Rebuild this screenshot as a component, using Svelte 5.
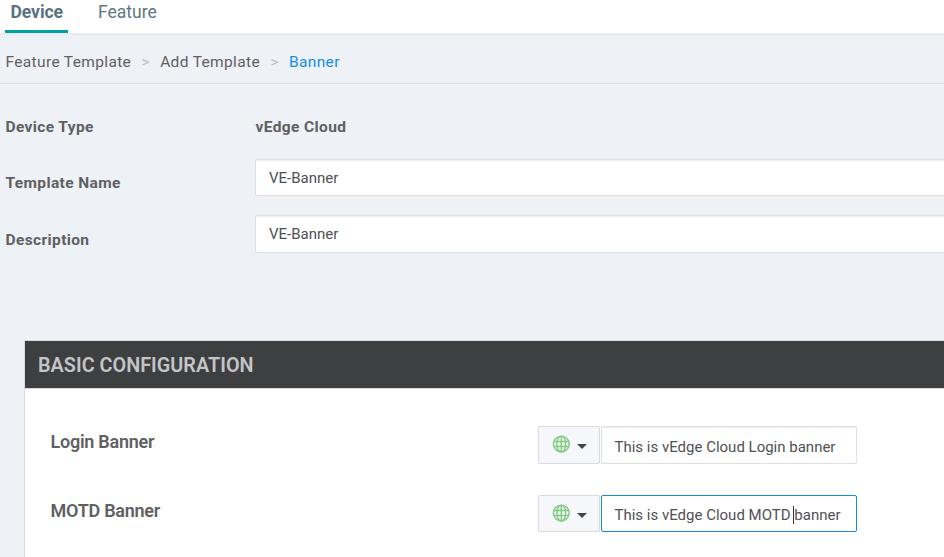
<script>
  const tabs = [
    { label: 'Device', active: true },
    { label: 'Feature', active: false }
  ];
  const banners = [
    { label: 'Login Banner', before: 'This is vEdge Cloud Login banner', after: '', focused: false },
    { label: 'MOTD Banner', before: 'This is vEdge Cloud MOTD ', after: 'banner', focused: true }
  ];
</script>

<div class="page">
  <nav class="tabs">
    {#each tabs as tab}
      <div class="tab" class:active={tab.active}><span>{tab.label}</span></div>
    {/each}
  </nav>

  <div class="crumbs">
    <span>Feature Template</span><i>&gt;</i><span>Add Template</span><i>&gt;</i><span class="current">Banner</span>
  </div>

  <div class="form">
    <div class="row type"><span class="label">Device Type</span><span class="label">vEdge Cloud</span></div>
    <div class="row name"><span class="label">Template Name</span><div class="field"><span>VE-Banner</span></div></div>
    <div class="row desc"><span class="label">Description</span><div class="field"><span>VE-Banner</span></div></div>
  </div>

  <section class="panel">
    <h2><span>BASIC CONFIGURATION</span></h2>
    {#each banners as b}
      <div class="setting" class:focused={b.focused}>
        <span class="title">{b.label}</span>
        <div class="scope">
          <svg class="globe" width="18" height="18" viewBox="0 0 18 18" fill="none" stroke="#83ca83" stroke-width="1.45">
            <circle cx="9.3" cy="9" r="7.9" />
            <ellipse cx="9.3" cy="9" rx="4.4" ry="7.9" />
            <path d="M9.3 1.3v15.4M2 6.5h14.6M2 11.5h14.6" />
          </svg>
          <svg class="caret" width="10" height="5" viewBox="0 0 10 5"><path d="M0 0h10L5 5z" fill="#444548" /></svg>
        </div>
        <div class="value"><span>{b.before}{#if b.focused}<b class="cursor"></b>{/if}{b.after}</span></div>
      </div>
    {/each}
  </section>
</div>

<style>
  :global(body) {
    overflow: hidden;
    background: #eef1f6;
  }
  .page {
    box-sizing: border-box;
    height: 557px;
    overflow: hidden;
    display: flex;
    flex-direction: column;
    background: #eef1f6;
    font-family: Roboto, "Liberation Sans", sans-serif;
    color: #5f6062;
  }
  span {
    white-space: pre;
  }
  .tabs {
    flex: none;
    box-sizing: border-box;
    display: flex;
    gap: 25px;
    height: 34px;
    padding-left: 5px;
    background: #fff;
    border-bottom: 1px solid #e9ecef;
    box-shadow: 0 1px 1px #e7eaee;
  }
  .tab {
    box-sizing: border-box;
    height: 33px;
    padding: 0 5px;
    font-size: 17.5px;
    line-height: 24px;
    color: #607681;
    border-bottom: 3px solid transparent;
  }
  .tab.active {
    width: 63px;
    padding-left: 5.5px;
    font-size: 17.6px;
    font-weight: 700;
    letter-spacing: -.1px;
    color: #587382;
    border-bottom-color: #00a2a1;
  }
  .crumbs {
    flex: none;
    box-sizing: border-box;
    height: 50px;
    padding: 6px 0 0 5.5px;
    display: flex;
    align-items: center;
    font-size: 15.5px;
    letter-spacing: .35px;
    border-bottom: 1px solid #dbdee2;
  }
  .crumbs i {
    font-style: normal;
    font-size: 15px;
    width: 29px;
    text-align: center;
    color: #bbbdc1;
  }
  .crumbs .current {
    color: #168ee9;
  }
  .form {
    flex: none;
    height: 256px;
  }
  .row {
    display: grid;
    grid-template-columns: 250px 1fr;
    padding-left: 5px;
  }
  .row.type {
    height: 75px;
    line-height: 86px;
  }
  .row.name {
    height: 56px;
  }
  .label {
    padding-left: .5px;
    font-size: 15.5px;
    font-weight: 700;
    letter-spacing: .38px;
  }
  .row.name .label {
    line-height: 48px;
  }
  .row.desc .label {
    line-height: 50px;
  }
  .field,
  .value {
    box-sizing: border-box;
    height: 37px;
    padding-left: 13px;
    border: 1px solid #dddfe1;
    border-radius: 2px;
    background: #fff;
    box-shadow: inset 0 1px 1px #eeeeef;
    font-size: 15px;
    line-height: 36px;
    color: #505154;
  }
  .field {
    margin-right: -4px;
  }
  .row.desc .field {
    height: 38px;
  }
  .panel {
    flex: none;
    box-sizing: border-box;
    height: 240px;
    margin: 0 -4px 0 24px;
    border: 1px solid #d8dbde;
    background: #fff;
  }
  h2 {
    box-sizing: border-box;
    height: 48px;
    margin: 0 0 37px;
    padding-left: 13px;
    background: #3e3f41;
    border-bottom: 1px solid #d8d9da;
    font-size: 19.8px;
    font-weight: 600;
    letter-spacing: .03px;
    line-height: 50px;
    color: #c4c5c7;
  }
  .setting {
    display: flex;
    height: 69px;
    padding-left: 25px;
    box-sizing: border-box;
  }
  .title {
    box-sizing: border-box;
    width: 488px;
    padding-left: .5px;
    font-size: 18px;
    font-weight: 600;
    letter-spacing: -.25px;
    line-height: 31px;
  }
  .scope {
    box-sizing: border-box;
    width: 62px;
    height: 38px;
    margin-right: 1px;
    border: 1px solid #d8dadd;
    border-radius: 2px;
    background: #f5f7fa;
    display: flex;
    align-items: flex-start;
    padding: 8px 0 0 13px;
  }
  .caret {
    margin: 9px 0 0 7px;
  }
  .value {
    width: 256px;
    height: 38px;
    padding-left: 12.5px;
    line-height: 40px;
  }
  .focused .scope,
  .focused .value {
    height: 37px;
  }
  .focused .value {
    border-color: #158bdd;
    box-shadow: none;
    line-height: 38px;
  }
  .cursor {
    display: inline-block;
    width: 1px;
    height: 18px;
    margin: 0 0 0 -1px;
    vertical-align: -4px;
    background: #333;
  }
</style>
